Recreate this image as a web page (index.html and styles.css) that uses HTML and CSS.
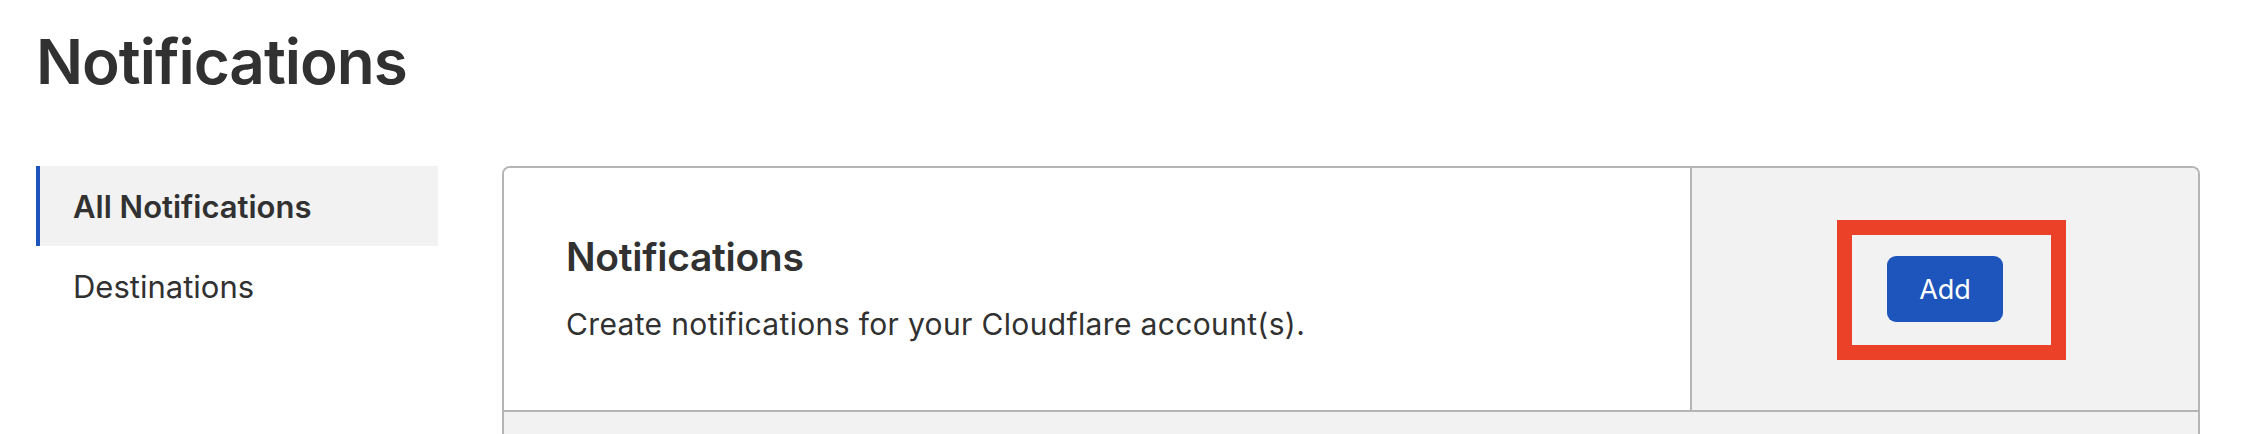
FILE: index.html
```html
<!DOCTYPE html>
<html lang="en">
<head>
<meta charset="utf-8">
<title>Notifications</title>
<link rel="stylesheet" href="styles.css">
</head>
<body>
<div class="page">
  <h1 class="page-title">Notifications</h1>
  <div class="layout">
    <nav class="sidenav">
      <a class="nav-item active">All Notifications</a>
      <a class="nav-item">Destinations</a>
    </nav>
    <section class="card">
      <div class="card-row">
        <div class="card-main">
          <h2 class="card-title">Notifications</h2>
          <p class="card-desc">Create notifications for your Cloudflare account(s).</p>
        </div>
        <div class="card-side">
          <div class="btn-wrap">
            <button class="btn-primary">Add</button>
            <span class="highlight"></span>
          </div>
        </div>
      </div>
      <div class="card-row-empty"></div>
    </section>
  </div>
</div>
</body>
</html>
```

FILE: styles.css
```css
* { box-sizing: border-box; }
html, body {
  margin: 0;
  padding: 0;
  background: #ffffff;
  overflow: hidden;
}
body {
  font-family: Inter, "Noto Sans", "Liberation Sans", sans-serif;
  color: #313131;
}
.page {
  padding: 0 46px 0 36px;
}
.page-title {
  margin: 0;
  padding-top: 30px;
  font-size: 62px;
  line-height: 64px;
  font-weight: 600;
  letter-spacing: -1px;
  color: #313131;
}
.layout {
  display: flex;
  gap: 64px;
  margin-top: 72px;
}
.sidenav {
  width: 402px;
  flex: none;
  display: flex;
  flex-direction: column;
}
.nav-item {
  display: flex;
  align-items: center;
  height: 80px;
  padding-left: 33px;
  font-size: 31px;
  color: #313131;
  border-left: 4px solid transparent;
}
.nav-item.active {
  background: #f2f2f2;
  border-left-color: #1d55bd;
  font-weight: 600;
}
.card {
  flex: 1;
  border: 2px solid #b5b5b5;
  border-bottom: none;
  border-radius: 8px 8px 0 0;
  overflow: hidden;
}
.card-row {
  display: flex;
  height: 244px;
  border-bottom: 2px solid #b5b5b5;
}
.card-main {
  flex: 1;
  display: flex;
  flex-direction: column;
  justify-content: center;
  padding-left: 62px;
  padding-bottom: 2px;
  background: #ffffff;
}
.card-title {
  margin: 0;
  font-size: 39px;
  line-height: 48px;
  font-weight: 600;
  letter-spacing: -0.3px;
}
.card-desc {
  margin: 23px 0 0;
  font-size: 30px;
  line-height: 40px;
  letter-spacing: 0.35px;
}
.card-side {
  width: 508px;
  flex: none;
  border-left: 2px solid #b5b5b5;
  background: #f2f2f2;
  display: flex;
  align-items: center;
  justify-content: center;
}
.btn-wrap {
  position: relative;
}
.btn-primary {
  display: block;
  width: 116px;
  height: 66px;
  border: none;
  border-radius: 9px;
  background: #1d55bd;
  color: #ffffff;
  font-family: inherit;
  font-size: 27px;
  padding: 0;
}
.highlight {
  position: absolute;
  left: -50px;
  top: -36px;
  width: 229px;
  height: 140px;
  border: 15px solid #ea4128;
  pointer-events: none;
}
.card-row-empty {
  height: 80px;
  background: #f2f2f2;
}
```
